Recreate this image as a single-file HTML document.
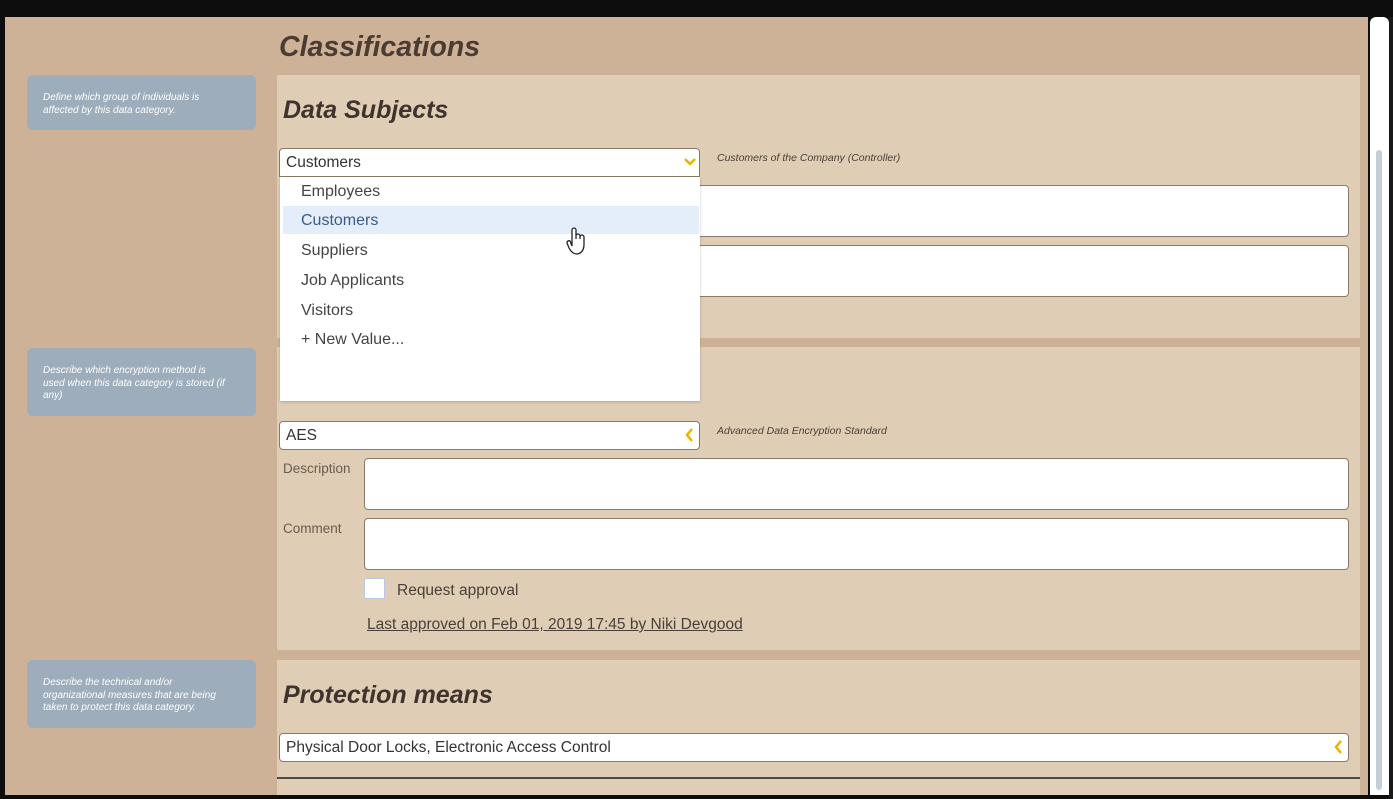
<!DOCTYPE html>
<html><head><style>
*{margin:0;padding:0;box-sizing:border-box}
body{width:1393px;height:799px;background:#0d0d0d;position:relative;overflow:hidden;font-family:"Liberation Sans",Arial,sans-serif}
.a{position:absolute}
.main{left:5px;top:17px;width:1363px;height:778px;background:#cdb298}
.panel{background:#e0cdb5;left:277px;width:1083px}
.tip{left:27px;width:229px;background:#9dadbb;border-radius:6px;color:#fff;font-style:italic;font-size:10px;line-height:12.5px;padding:16px 28px 16px 16px}
h1{font-size:28.5px;font-style:italic;font-weight:bold;color:#4a3c33}
h2{font-size:25px;font-style:italic;font-weight:bold;color:#3f342d}
.box{background:#fff;border:1px solid #8a7a6a;border-radius:4px}
.sel{font-size:15.5px;color:#333;padding:5px 6px;height:29px}
.hint{font-size:10.5px;font-style:italic;color:#4a4038}
.item{left:301px;font-size:16px;color:#444}
.lab{font-size:13.5px;color:#6a5b4e}
</style></head><body>
<div class="a main"></div>
<div class="a" style="left:1370px;top:17px;width:19px;height:778px;background:#fff;border-radius:6px 6px 0 0"></div>
<div class="a" style="left:1376px;top:150px;width:6px;height:640px;background:#c3ced6;border-radius:3px"></div>
<div class="a" style="left:1389px;top:17px;width:4px;height:782px;background:#1a1a1a"></div>

<h1 class="a" style="left:279px;top:31px">Classifications</h1>

<div class="a panel" style="top:75px;height:263px"></div>
<div class="a panel" style="top:347px;height:303px"></div>
<div class="a panel" style="top:660px;height:119px"></div>
<div class="a" style="left:277px;top:777px;width:1083px;height:2px;background:#4c4a46"></div>
<div class="a" style="left:277px;top:779px;width:1083px;height:16px;background:#e0cdb5"></div>

<div class="a tip" style="top:75px;height:55px;padding-top:17px">Define which group of individuals is affected by this data category.</div>
<div class="a tip" style="top:348px;height:68px;padding-top:17px">Describe which encryption method is used when this data category is stored (if any)</div>
<div class="a tip" style="top:660px;height:68px;padding-top:17px">Describe the technical and/or organizational measures that are being taken to protect this data category.</div>

<h2 class="a" style="left:283px;top:96px">Data Subjects</h2>
<div class="a hint" style="left:717px;top:152px">Customers of the Company (Controller)</div>
<div class="a box" style="left:364px;top:185px;width:985px;height:52px"></div>
<div class="a box" style="left:364px;top:245px;width:985px;height:52px"></div>

<div class="a box sel" style="left:279px;top:148px;width:421px;border-radius:4px 4px 0 0">Customers</div>
<svg class="a" style="left:683px;top:156px" width="14" height="10"><path d="M2 3 L7 8 L12 3" stroke="#e8b400" stroke-width="2.5" fill="none"/></svg>
<div class="a" style="left:280px;top:177px;width:420px;height:224px;background:#fff;box-shadow:0 1px 3px rgba(0,0,0,.2)"></div>
<div class="a" style="left:283px;top:206px;width:416px;height:28px;background:#e3eefa"></div>
<div class="a item" style="top:183px">Employees</div>
<div class="a item" style="top:212px;color:#3a5a8a">Customers</div>
<div class="a item" style="top:242px">Suppliers</div>
<div class="a item" style="top:272px">Job Applicants</div>
<div class="a item" style="top:302px">Visitors</div>
<div class="a item" style="top:331px">+ New Value...</div>
<svg class="a" style="left:565px;top:226px" width="22" height="30"><path d="M7 20 V4 a2 2 0 0 1 4 0 V13 V10 a2 2 0 0 1 4 0 V13 V11 a2 2 0 0 1 4 0 V18 Q19 27 12 28 Q7 28 4 22 L2 17 a2 2 0 0 1 3 -2 Z" fill="#fff" stroke="#222" stroke-width="1.3"/></svg>

<div class="a box sel" style="left:279px;top:421px;width:421px">AES</div>
<svg class="a" style="left:684px;top:427px" width="12" height="16"><path d="M8 2 L3 8 L8 14" stroke="#e8b400" stroke-width="2.5" fill="none"/></svg>
<div class="a hint" style="left:717px;top:425px">Advanced Data Encryption Standard</div>
<div class="a lab" style="left:283px;top:461px">Description</div>
<div class="a box" style="left:364px;top:458px;width:985px;height:52px"></div>
<div class="a lab" style="left:283px;top:521px">Comment</div>
<div class="a box" style="left:364px;top:518px;width:985px;height:52px"></div>
<div class="a" style="left:364px;top:578px;width:21px;height:21px;background:#fff;border:1px solid #b8c8e0;border-radius:2px"></div>
<div class="a" style="left:397px;top:582px;font-size:15.5px;color:#4a4038">Request approval</div>
<div class="a" style="left:367px;top:616px;font-size:15.5px;color:#4a4038;text-decoration:underline">Last approved on Feb 01, 2019 17:45 by Niki Devgood</div>

<h2 class="a" style="left:283px;top:681px">Protection means</h2>
<div class="a box sel" style="left:279px;top:733px;width:1070px">Physical Door Locks, Electronic Access Control</div>
<svg class="a" style="left:1333px;top:739px" width="12" height="16"><path d="M8 2 L3 8 L8 14" stroke="#e8b400" stroke-width="2.5" fill="none"/></svg>
</body></html>
